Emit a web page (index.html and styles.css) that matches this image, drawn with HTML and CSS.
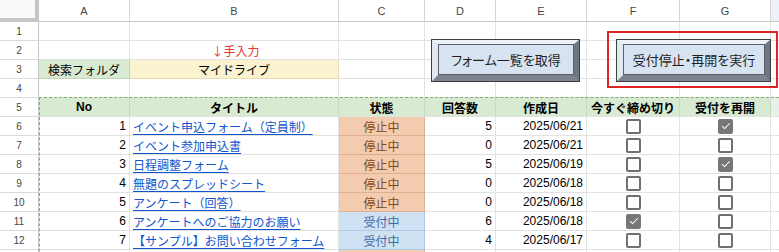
FILE: index.html
```html
<!DOCTYPE html>
<html lang="ja">
<head>
<meta charset="utf-8">
<title>Sheet</title>
<link rel="stylesheet" href="styles.css">
</head>
<body>
<div class="sheet">
  <div class="grid">
    <div class="corner"></div>
    <div class="ch">A</div><div class="ch">B</div><div class="ch">C</div><div class="ch">D</div><div class="ch">E</div><div class="ch">F</div><div class="ch">G</div><div class="ch chh"></div>

    <div class="rh">1</div>
    <div class="c"></div><div class="c"></div><div class="c"></div><div class="c"></div><div class="c"></div><div class="c"></div><div class="c"></div><div class="c"></div>

    <div class="rh">2</div>
    <div class="c"></div><div class="c ctr note">↓手入力</div><div class="c"></div><div class="c"></div><div class="c"></div><div class="c"></div><div class="c"></div><div class="c"></div>

    <div class="rh">3</div>
    <div class="c ctr label">検索フォルダ</div><div class="c ctr folder">マイドライブ</div><div class="c"></div><div class="c"></div><div class="c"></div><div class="c"></div><div class="c"></div><div class="c"></div>

    <div class="rh">4</div>
    <div class="c"></div><div class="c"></div><div class="c"></div><div class="c"></div><div class="c"></div><div class="c"></div><div class="c"></div><div class="c"></div>

    <div class="rh">5</div>
    <div class="c ctr hd">No</div><div class="c ctr hd">タイトル</div><div class="c ctr hd">状態</div><div class="c ctr hd">回答数</div><div class="c ctr hd">作成日</div><div class="c ctr hd">今すぐ締め切り</div><div class="c ctr hd">受付を再開</div><div class="c hsel"></div>

    <div class="rh">6</div>
    <div class="c r">1</div><div class="c l"><a class="link">イベント申込フォーム（定員制）</a></div><div class="c ctr stop">停止中</div><div class="c r">5</div><div class="c r">2025/06/21</div><div class="c ctr"><span class="cb"></span></div><div class="c ctr"><span class="cb on"></span></div><div class="c"></div>

    <div class="rh">7</div>
    <div class="c r">2</div><div class="c l"><a class="link">イベント参加申込書</a></div><div class="c ctr stop">停止中</div><div class="c r">0</div><div class="c r">2025/06/21</div><div class="c ctr"><span class="cb"></span></div><div class="c ctr"><span class="cb"></span></div><div class="c"></div>

    <div class="rh">8</div>
    <div class="c r">3</div><div class="c l"><a class="link">日程調整フォーム</a></div><div class="c ctr stop">停止中</div><div class="c r">5</div><div class="c r">2025/06/19</div><div class="c ctr"><span class="cb"></span></div><div class="c ctr"><span class="cb on"></span></div><div class="c"></div>

    <div class="rh">9</div>
    <div class="c r">4</div><div class="c l"><a class="link">無題のスプレッドシート</a></div><div class="c ctr stop">停止中</div><div class="c r">0</div><div class="c r">2025/06/18</div><div class="c ctr"><span class="cb"></span></div><div class="c ctr"><span class="cb"></span></div><div class="c"></div>

    <div class="rh">10</div>
    <div class="c r">5</div><div class="c l"><a class="link">アンケート（回答）</a></div><div class="c ctr stop">停止中</div><div class="c r">0</div><div class="c r">2025/06/18</div><div class="c ctr"><span class="cb"></span></div><div class="c ctr"><span class="cb"></span></div><div class="c"></div>

    <div class="rh">11</div>
    <div class="c r">6</div><div class="c l"><a class="link">アンケートへのご協力のお願い</a></div><div class="c ctr open">受付中</div><div class="c r">6</div><div class="c r">2025/06/18</div><div class="c ctr"><span class="cb on"></span></div><div class="c ctr"><span class="cb"></span></div><div class="c"></div>

    <div class="rh">12</div>
    <div class="c r">7</div><div class="c l"><a class="link">【サンプル】お問い合わせフォーム</a></div><div class="c ctr open">受付中</div><div class="c r">4</div><div class="c r">2025/06/17</div><div class="c ctr"><span class="cb"></span></div><div class="c ctr"><span class="cb"></span></div><div class="c"></div>

    <div class="rh"></div>
    <div class="c r"></div><div class="c l"></div><div class="c ctr stop"></div><div class="c r"></div><div class="c r"></div><div class="c ctr"><span class="cb"></span></div><div class="c ctr"><span class="cb"></span></div><div class="c"></div>
  </div>

  <div class="marquee"></div>

  <div class="btn btn-list"><div class="bevel"><div class="face">フォーム一覧を取得</div></div></div>
  <div class="highlight"></div>
  <div class="btn btn-run"><div class="bevel"><div class="face">受付停止・再開を実行</div></div></div>
</div>
</body>
</html>
```

FILE: styles.css
```css
* { box-sizing: border-box; }

html, body {
  margin: 0;
  padding: 0;
  background: #ffffff;
  overflow: hidden;
}

body {
  font-family: "Liberation Sans", "Noto Sans CJK JP", sans-serif;
  font-size: 12px;
  color: #000;
}

.sheet {
  position: relative;
  width: 779px;
  height: 252px;
  overflow: hidden;
}

.grid {
  display: grid;
  grid-template-columns: 39px 91px 209px 86px 71px 91px 93px 91px 40px;
  grid-template-rows: 22px repeat(13, 19px);
}

.corner {
  background: #f8f9fa;
  border-right: 4px solid #c4c7c5;
  border-bottom: 4px solid #c4c7c5;
}

.ch {
  display: flex;
  align-items: center;
  justify-content: center;
  font-size: 11px;
  color: #444746;
  background: #ffffff;
  border-right: 1px solid #d5d5d5;
  border-bottom: 1px solid #c4c7c5;
}

.chh {
  background: #eaf1fb;
}

.rh {
  display: flex;
  align-items: center;
  justify-content: center;
  font-size: 10px;
  color: #444746;
  background: #ffffff;
  border-right: 1px solid #c4c7c5;
  border-bottom: 1px solid #dadada;
}

.c {
  display: flex;
  align-items: center;
  min-width: 0;
  white-space: nowrap;
  overflow: hidden;
  border-right: 1px solid #e2e2e2;
  border-bottom: 1px solid #e2e2e2;
  padding: 0 3px;
}

.ctr { justify-content: center; }
.r { justify-content: flex-end; }
.l { justify-content: flex-start; }

.note {
  font-family: "Noto Sans CJK JP", sans-serif;
  color: #e53935;
  padding-left: 6px;
}

.label {
  background: #d9ead3;
  border-right-color: #c3d3bc;
  border-bottom-color: #c3d3bc;
}

.folder {
  background: #fbf2cf;
  border-right-color: #e6dcb3;
  border-bottom-color: #e6dcb3;
}

.hd {
  background: #d9ead3;
  font-weight: bold;
  border-right-color: #c8d9c1;
  border-bottom-color: #e2e2e2;
}

.hsel {
  background: #e8f0e9;
}

.link {
  color: #1155cc;
  text-decoration: underline;
  text-underline-offset: 2px;
}

.stop {
  background: #f3cbae;
  color: #7b4a1f;
  border-right-color: #deb08f;
  border-bottom-color: #deb08f;
}

.open {
  background: #cfe2f3;
  color: #3e6aa4;
  border-right-color: #aec8e2;
  border-bottom-color: #aec8e2;
}

.cb {
  position: relative;
  display: block;
  width: 15px;
  height: 15px;
  border: 2px solid #707070;
  border-radius: 2px;
  background: #ffffff;
}

.cb.on {
  background: #777777;
  border-color: #777777;
}

.cb.on::after {
  content: "";
  position: absolute;
  left: 2px;
  top: 2px;
  width: 7px;
  height: 3px;
  border-left: 1.5px solid #ffffff;
  border-bottom: 1.5px solid #ffffff;
  transform: rotate(-45deg);
}

.marquee {
  position: absolute;
  left: 39px;
  top: 97px;
  width: 760px;
  height: 200px;
  border-top: 1px dashed #7fae6a;
  border-left: 1px dashed #7fae6a;
}

.btn {
  position: absolute;
  top: 39px;
  height: 43px;
  border: 1px solid #3c4043;
  background: #d7e3f1;
}

.btn-list {
  left: 431px;
  width: 149px;
}

.btn-run {
  left: 616px;
  width: 155px;
}

.bevel {
  width: 100%;
  height: 100%;
  border-style: solid;
  border-width: 4px 5px 6px 6px;
  border-top-color: #edf2f9;
  border-left-color: #e1e8f2;
  border-right-color: #6e767f;
  border-bottom-color: #7c848d;
}

.face {
  width: 100%;
  height: 100%;
  display: flex;
  align-items: center;
  justify-content: center;
  background: #d7e3f1;
  border: 1px solid #5b6168;
  font-family: "Noto Sans CJK JP", sans-serif;
  font-feature-settings: "palt" 1;
  font-size: 13px;
  color: #1f1f1f;
  white-space: nowrap;
}

.highlight {
  position: absolute;
  left: 607px;
  top: 31px;
  width: 171px;
  height: 57px;
  border: 2px solid #e02424;
}
```
